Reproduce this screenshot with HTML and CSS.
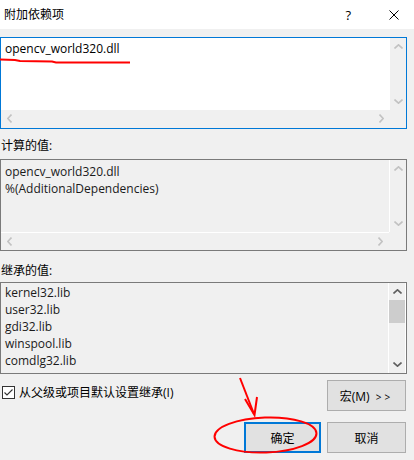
FILE: index.html
```html
<!DOCTYPE html>
<html lang="zh-CN">
<head>
<meta charset="utf-8">
<title>附加依赖项</title>
<link rel="stylesheet" href="styles.css">
</head>
<body>
<div class="dialog">
  <div class="titlebar">
    <span class="title">附加依赖项</span>
    <span class="help">?</span>
    <svg class="close" width="10" height="10" viewBox="0 0 10 10"><path d="M0.5 0.5 L9.5 9.5 M9.5 0.5 L0.5 9.5" stroke="#000" stroke-width="1" fill="none"/></svg>
  </div>
  <div class="main">
    <div class="box box-edit">
      <div class="content pad-edit">opencv_world320.dll</div>
      <div class="vscroll">
        <div class="arrow"><svg width="9" height="5" viewBox="0 0 9 5"><polyline points="0.5,4.5 4.5,0.8 8.5,4.5" class="chev light"/></svg></div>
        <div class="arrow"><svg width="9" height="5" viewBox="0 0 9 5"><polyline points="0.5,0.5 4.5,4.2 8.5,0.5" class="chev light"/></svg></div>
      </div>
      <div class="hscroll">
        <div class="arrow"><svg width="5" height="9" viewBox="0 0 5 9"><polyline points="4.5,0.5 0.8,4.5 4.5,8.5" class="chev light"/></svg></div>
        <div class="arrow"><svg width="5" height="9" viewBox="0 0 5 9"><polyline points="0.5,0.5 4.2,4.5 0.5,8.5" class="chev light"/></svg></div>
      </div>
      <div class="corner"></div>
    </div>

    <div class="label label-first">计算的值:</div>
    <div class="box box-ro">
      <div class="content pad-ro">
        <div>opencv_world320.dll</div>
        <div>%(AdditionalDependencies)</div>
      </div>
      <div class="vscroll sep-left">
        <div class="arrow"><svg width="9" height="5" viewBox="0 0 9 5"><polyline points="0.5,4.5 4.5,0.8 8.5,4.5" class="chev light"/></svg></div>
        <div class="arrow"><svg width="9" height="5" viewBox="0 0 9 5"><polyline points="0.5,0.5 4.5,4.2 8.5,0.5" class="chev light"/></svg></div>
      </div>
      <div class="hscroll sep-top">
        <div class="arrow"><svg width="5" height="9" viewBox="0 0 5 9"><polyline points="4.5,0.5 0.8,4.5 4.5,8.5" class="chev light"/></svg></div>
        <div class="arrow"><svg width="5" height="9" viewBox="0 0 5 9"><polyline points="0.5,0.5 4.2,4.5 0.5,8.5" class="chev light"/></svg></div>
      </div>
      <div class="corner"></div>
    </div>

    <div class="label label-second">继承的值:</div>
    <div class="box box-ro box-list">
      <div class="content pad-list">
        <div>kernel32.lib</div>
        <div>user32.lib</div>
        <div>gdi32.lib</div>
        <div>winspool.lib</div>
        <div>comdlg32.lib</div>
      </div>
      <div class="vscroll sep-left">
        <div class="arrow"><svg width="9" height="5" viewBox="0 0 9 5"><polyline points="0.5,4.5 4.5,0.8 8.5,4.5" class="chev dark"/></svg></div>
        <div class="thumb"></div>
        <div class="spacer"></div>
        <div class="arrow"><svg width="9" height="5" viewBox="0 0 9 5"><polyline points="0.5,0.5 4.5,4.2 8.5,0.5" class="chev dark"/></svg></div>
      </div>
    </div>

    <div class="row-one">
      <label class="check">
        <svg class="checkbox" width="13" height="13" viewBox="0 0 13 13"><rect x="0.5" y="0.5" width="12" height="12" fill="#fff" stroke="#333"/><polyline points="2.5,6.5 5,9 10.5,3.5" fill="none" stroke="#333" stroke-width="1.1"/></svg>
        <span>从父级或项目默认设置继承(I)</span>
      </label>
      <button class="btn">宏(M) <span class="gt">&gt;&gt;</span></button>
    </div>
    <div class="row-two">
      <button class="btn btn-default">确定</button>
      <button class="btn">取消</button>
    </div>
  </div>

  <svg class="annot" width="414" height="460" viewBox="0 0 414 460">
    <path d="M0 59.5 L15 60 L20 61 L52 61.5 L56 62.5 L130 62.5" stroke="#f00" stroke-width="2" fill="none"/>
    <path d="M240 378 L254 414" stroke="#f00" stroke-width="2" fill="none"/>
    <path d="M245 399 L254.5 415 L257 397" stroke="#f00" stroke-width="2" fill="none" stroke-linejoin="miter"/>
    <ellipse cx="265.5" cy="435" rx="51" ry="17.5" transform="rotate(-2 265.5 435)" stroke="#f00" stroke-width="2" fill="none"/>
  </svg>
</div>
</body>
</html>
```

FILE: styles.css
```css
* { box-sizing: border-box; }

body {
  margin: 0;
  background: #f0f0f0;
  font-family: "Open Sans", "Noto Sans CJK SC", sans-serif;
  font-size: 12px;
  color: #000;
}

.dialog {
  position: relative;
  width: 414px;
  height: 460px;
  overflow: hidden;
}

.titlebar {
  height: 29px;
  background: #fff;
  display: flex;
  align-items: center;
  padding-left: 4px;
  line-height: 16px;
}

.title {
  flex: 1;
  font-size: 12px;
}

.help {
  font-size: 13px;
  margin-right: 38px;
}

.close {
  margin-right: 15px;
}

.main {
  padding: 8px 7px 0 0;
}

.box {
  height: 92px;
  display: grid;
  grid-template-columns: 1fr 17px;
  grid-template-rows: 1fr 18px;
  line-height: 17px;
  overflow: hidden;
}

.box-edit {
  border: 1px solid #0078d7;
  grid-template-columns: 1fr 16px;
}

.box-edit .content {
  background: #fff;
}

.box-ro {
  border: 1px solid #7a7a7a;
  box-shadow: inset -1px 0 0 #fff;
  color: #1a1a1a;
}

.box-list {
  grid-template-rows: 1fr;
  grid-template-columns: 1fr 18px;
}

.content {
  overflow: hidden;
  padding-left: 4px;
}

.pad-edit { padding-top: 2px; }
.pad-ro { padding-top: 3px; }
.pad-list { padding-top: 1px; }

.vscroll {
  display: flex;
  flex-direction: column;
  justify-content: space-between;
  background: #f0f0f0;
}

.box-list .vscroll {
  margin-right: 1px;
}

.sep-left { border-left: 1px solid #fff; }
.sep-top { border-top: 1px solid #fff; }

.hscroll {
  display: flex;
  justify-content: space-between;
  background: #f0f0f0;
}

.corner { background: #f0f0f0; }

.arrow {
  width: 17px;
  height: 17px;
  display: flex;
  align-items: center;
  justify-content: center;
  flex: none;
}

.vscroll .arrow { width: auto; }

.chev {
  fill: none;
  stroke-width: 1.6;
}

.chev.light { stroke: #c2c2c2; }
.chev.dark { stroke: #606060; }

.thumb {
  height: 23px;
  background: #cdcdcd;
  flex: none;
}

.spacer { flex: 1; }

.label {
  line-height: 16px;
  padding-left: 1px;
}

.label-first {
  padding-top: 9px;
  padding-bottom: 5px;
}

.label-second {
  padding-top: 12px;
  padding-bottom: 3px;
}

.row-one {
  display: flex;
  justify-content: space-between;
  align-items: flex-start;
  margin-top: 6px;
  padding-right: 1px;
}

.check {
  display: flex;
  align-items: center;
  gap: 4px;
  margin-top: 5px;
  padding-left: 2px;
  line-height: 15px;
  color: #000;
}

.checkbox { flex: none; }

.row-two {
  display: flex;
  justify-content: flex-end;
  gap: 6px;
  margin-top: 11px;
  padding-right: 1px;
}

.btn {
  width: 79px;
  height: 31px;
  border: 1px solid #adadad;
  background: #e1e1e1;
  font-family: "Open Sans", "Noto Sans CJK SC", sans-serif;
  font-size: 12px;
  color: #000;
  padding: 0;
  margin: 0;
}

.btn-default {
  width: 77px;
  border: 2px solid #0078d7;
}

.gt {
  font-size: 10px;
  letter-spacing: 3px;
  margin-left: 3px;
}

.annot {
  position: absolute;
  left: 0;
  top: 0;
  pointer-events: none;
}
```
